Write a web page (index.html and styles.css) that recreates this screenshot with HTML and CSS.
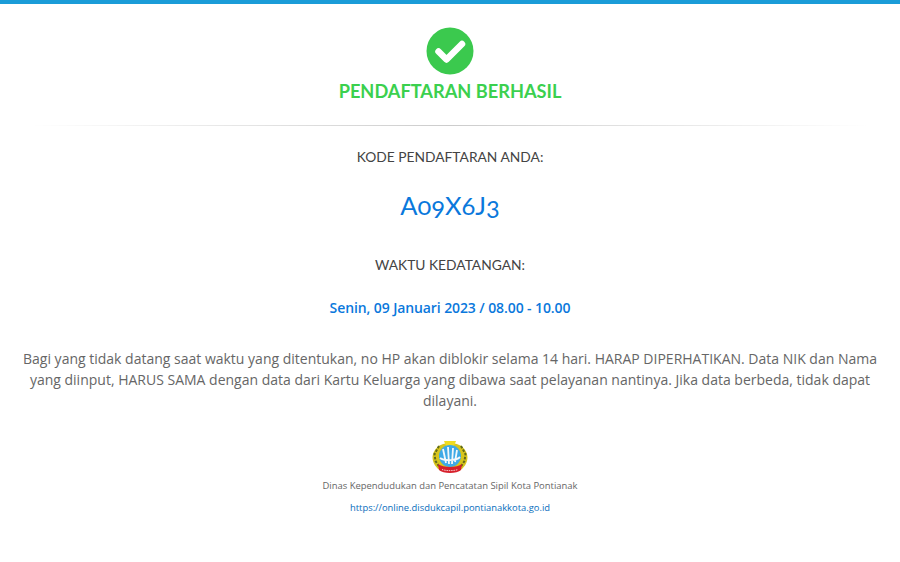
FILE: index.html
```html
<!DOCTYPE html>
<html lang="en">
<head>
  <meta charset="UTF-8" />
  <meta name="viewport" content="width=device-width, initial-scale=1.0"/>
  <title>Pendaftaran Berhasil</title>
  <link rel="stylesheet" href="styles.css">
</head>
<body>
  <div class="top-bar"></div>

  <div class="content">
    <svg class="check-icon" viewBox="0 0 48 48">
      <circle cx="24" cy="24" r="23.5" fill="#3bc94e"/>
      <path d="M12.5 24.5 L20.5 32.5 L36 17" fill="none" stroke="#fff" stroke-width="6.5" stroke-linecap="round" stroke-linejoin="round"/>
    </svg>
    <h1 class="title">PENDAFTARAN BERHASIL</h1>
    <div class="divider"></div>

    <h2 class="label label-code">KODE PENDAFTARAN ANDA:</h2>
    <div class="code">A09X6J3</div>

    <h2 class="label label-time">WAKTU KEDATANGAN:</h2>
    <div class="time">Senin, 09 Januari 2023 / 08.00 - 10.00</div>

    <p class="note">Bagi yang tidak datang saat waktu yang ditentukan, no HP akan diblokir selama 14 hari. HARAP DIPERHATIKAN. Data NIK dan Nama yang diinput, HARUS SAMA dengan data dari Kartu Keluarga yang dibawa saat pelayanan nantinya. Jika data berbeda, tidak dapat dilayani.</p>

    <svg class="logo" viewBox="0 0 36 34">
      <!-- wreath -->
      <path d="M18 3 C8 3 1 9 0.5 17 C0.5 23 4 28 9 31 L27 31 C32 28 35.5 23 35.5 17 C35 9 28 3 18 3 Z" fill="#d8c51c"/>
      <path d="M7 6 L2.5 14 L3.5 21 L8 28 M29 6 L33.5 14 L32.5 21 L28 28" fill="none" stroke="#5f6a1c" stroke-width="2" stroke-dasharray="2.5 1.5"/>
      <path d="M12 1 H24 L22 6 H14 Z" fill="#f0dc20"/>
      <!-- shield -->
      <circle cx="18" cy="16" r="11" fill="#3fa9e6"/>
      <path d="M11 9 L14 23 M16 7 L17 24 M21 8 L20 24 M25 10 L23 22 M8 18 C12 21 24 21 28 17" fill="none" stroke="#f4f8fb" stroke-width="1.8"/>
      <!-- ribbon -->
      <path d="M6 24 C11 28 25 28 30 24 L29 30 C25 34 11 34 7 30 Z" fill="#d71f2b"/>
      <path d="M10 29.5 C14 31 22 31 26 29.5" fill="none" stroke="#f6d9d9" stroke-width="0.9" stroke-dasharray="1.5 0.8"/>
    </svg>
    <div class="agency">Dinas Kependudukan dan Pencatatan Sipil Kota Pontianak</div>
    <a class="site-link" href="#">https://online.disdukcapil.pontianakkota.go.id</a>
  </div>
</body>
</html>
```

FILE: styles.css
```css
body {
  margin: 0;
  font-family: "Open Sans", sans-serif;
  background-color: #ffffff;
  color: #666666;
  text-align: center;
}

.top-bar {
  height: 4px;
  background-color: #1a9cd8;
}

.content {
  display: flex;
  flex-direction: column;
  align-items: center;
  padding: 23px 15px 0;
}

.check-icon {
  width: 48px;
  height: 48px;
}

.title {
  margin: 3px 0 0;
  font-family: Lato, sans-serif;
  font-size: 18.2px;
  line-height: 26px;
  font-weight: 700;
  color: #3bd04e;
}

.divider {
  width: 840px;
  height: 1px;
  margin-top: 21px;
  background: linear-gradient(to right, rgba(0,0,0,0), rgba(0,0,0,0.2), rgba(0,0,0,0));
}

.label {
  margin: 0;
  font-family: Lato, sans-serif;
  font-size: 13.8px;
  line-height: 20px;
  font-weight: 400;
  color: #444444;
}

.label-code {
  margin-top: 21px;
}

.code {
  margin-top: 21px;
  font-family: Lato, sans-serif;
  font-size: 25.5px;
  line-height: 34px;
  font-feature-settings: "onum";
  color: #0a78dc;
}

.label-time {
  margin-top: 33px;
}

.time {
  margin-top: 23px;
  font-size: 14px;
  line-height: 20px;
  font-weight: 600;
  letter-spacing: -0.1px;
  color: #0a78dc;
}

.note {
  margin: 30px 0 0;
  font-size: 14px;
  line-height: 21px;
  color: #666666;
}

.logo {
  width: 36px;
  height: 34px;
  margin-top: 29px;
}

.agency {
  margin-top: 5px;
  font-size: 9.45px;
  line-height: 14px;
  color: #666666;
}

.site-link {
  margin-top: 8px;
  font-size: 9.4px;
  line-height: 14px;
  color: #0a6ebd;
  text-decoration: none;
}
```
